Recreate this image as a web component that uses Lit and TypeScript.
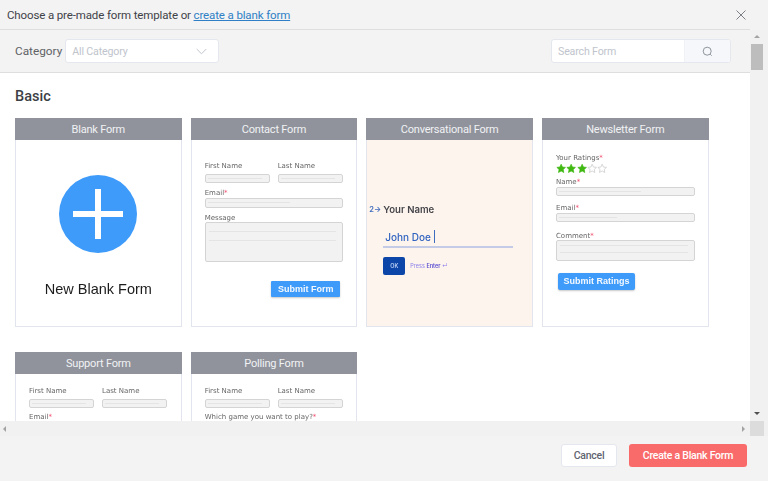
import { LitElement, css, html } from "lit";
import { customElement } from "lit/decorators.js";

const star = (on: boolean) => html`<svg class="star" viewBox="0 0 24 24" width="10.300" height="11">
  <path d="M12 2l3 6.600 7 .8-5.200 4.800 1.400 7.100L12 17.800 5.800 21.300l1.400-7.100L2 9.400l7-.8z"
    fill=${on ? "#3fb811" : "#fff"} stroke=${on ? "#3fb811" : "#c4c4c4"} stroke-width="1.600"></path>
</svg>`;

const label = (text: string, req = false) =>
  html`<div class="lbl">${text}${req ? html`<i>*</i>` : ""}</div>`;

const input = (w = 88) =>
  html`<div class="inp"><span style="width:${w}%"></span></div>`;

const area = (tall = false) => html`<div class="area ${tall ? "tall" : ""}"><span></span><span></span></div>`;

const names = html`<div class="two">
  <div>${label("First Name")}${input(92)}</div>
  <div>${label("Last Name")}${input(92)}</div>
</div>`;

@customElement("app-root")
export class AppRoot extends LitElement {
  static styles = css`
    :host {
      display: block;
      width: 768px;
      height: 481px;
      overflow: hidden;
      background: #f3f3f3;
      font-family: Roboto, "Noto Sans", sans-serif;
      color: #3f4248;
    }
    .top {
      width: 750px;
      height: 30px;
      box-sizing: border-box;
      padding: 1px 4px 0 7px;
      border-bottom: 1px solid #dedede;
      display: flex;
      align-items: center;
      justify-content: space-between;
      font-size: 11.5px;
      letter-spacing: -0.13px;
    }
    .top a {
      color: #2f7fc6;
      text-decoration: underline;
    }
    .mid {
      display: flex;
      height: 391px;
    }
    .scroller {
      width: 750px;
      overflow: hidden;
    }
    .filter {
      height: 43px;
      box-sizing: border-box;
      padding: 9px 19px 0 15px;
      border-bottom: 1px solid #dedede;
      display: flex;
      align-items: flex-start;
      justify-content: space-between;
    }
    .cat {
      display: flex;
      align-items: center;
      gap: 3px;
      font-size: 11.8px;
      color: #606266;
    }
    .select,
    .search {
      height: 24px;
      box-sizing: border-box;
      background: #fff;
      border: 1px solid #e4e7ed;
      border-radius: 3px;
      font-size: 10.6px;
      letter-spacing: -0.15px;
      color: #c0c4cc;
      display: flex;
      align-items: center;
    }
    .select {
      width: 154px;
      padding: 0 11px 0 6px;
      justify-content: space-between;
    }
    .search {
      width: 180px;
      padding-left: 6px;
      justify-content: space-between;
      overflow: hidden;
    }
    .search b {
      width: 46px;
      height: 100%;
      background: #f5f7fa;
      border-left: 1px solid #f0f2f6;
      box-sizing: border-box;
      display: flex;
      align-items: center;
      justify-content: center;
    }
    .content {
      background: #fff;
      height: 348px;
      box-sizing: border-box;
      padding: 14px 15px 0;
      overflow: hidden;
    }
    h2 {
      margin: 0 0 11px;
      font-size: 14.5px;
      line-height: 20px;
      font-weight: 500;
      color: #3c3f45;
    }
    .grid {
      display: grid;
      grid-template-columns: repeat(4, 166.670px);
      column-gap: 9px;
      row-gap: 25px;
    }
    .card {
      height: 209px;
      box-sizing: border-box;
      border: 1px solid #e2e4ee;
      display: flex;
      flex-direction: column;
    }
    .card > header {
      height: 22px;
      flex: none;
      margin: -1px -1px 0;
      background: #90939c;
      color: #f1f2f4;
      font-size: 11px;
      letter-spacing: -0.2px;
      line-height: 24px;
      text-align: center;
    }
    .thumb {
      flex: 1;
      min-height: 0;
      box-sizing: border-box;
      padding: 22px 13px 0 13px;
      font-family: "DejaVu Sans", sans-serif;
      filter: blur(0.35px);
    }
    .two {
      display: grid;
      grid-template-columns: 65px 65px;
      column-gap: 8px;
      margin-bottom: 5.500px;
    }
    .lbl {
      font-size: 7px;
      line-height: 9px;
      color: #666;
    }
    .lbl i {
      color: #f0506e;
      font-style: normal;
    }
    .inp {
      height: 9px;
      margin-top: 3px;
      box-sizing: border-box;
      border: 1px solid #d4d4d4;
      border-radius: 2px;
      background: #f2f2f2;
      display: flex;
      align-items: center;
      padding: 0 2px;
    }
    .inp span,
    .area span {
      display: block;
      height: 1px;
      background: #e4e4e4;
    }
    .area {
      height: 40px;
      box-sizing: border-box;
      border: 1px solid #d4d4d4;
      border-radius: 2px;
      background: #f2f2f2;
      padding: 8px 6px 0 3px;
      display: flex;
      flex-direction: column;
      gap: 8px;
    }
    .area.tall {
      height: 21px;
      margin-top: -1px;
      padding-top: 4px;
      gap: 6px;
    }
    .contact .area {
      margin-top: -1px;
    }
    .contact .full {
      margin-bottom: 6.500px;
    }
    .contact .full .inp {
      margin-top: 0;
      height: 10px;
    }
    .send {
      display: block;
      margin: 19px 0 0 auto;
      background: #3e9bfa;
      color: #f3f8ff;
      font-weight: 700;
      font-family: "Liberation Sans", sans-serif;
      border-radius: 1px;
      box-shadow: 0 1px 2px rgba(0, 0, 0, 0.22);
      text-align: center;
    }
    .contact .send {
      width: 69px;
      height: 16px;
      line-height: 16px;
      font-size: 9px;
      margin-right: 3px;
    }
    .blank {
      display: flex;
      flex-direction: column;
      align-items: center;
      padding: 35px 0 0;
      font-family: "Liberation Sans", sans-serif;
      font-size: 14.5px;
      color: #1c1c1c;
      gap: 28px;
    }
    .conv {
      background: #fdf4ee;
      padding: 63px 19px 0 16px;
      font-family: Inter, sans-serif;
      filter: blur(0.45px);
    }
    .conv .q {
      display: flex;
      align-items: center;
      font-size: 9.6px;
      font-weight: 600;
      color: #45454a;
      line-height: 14px;
      margin-left: -14px;
      gap: 3px;
    }
    .conv .q small {
      font-size: 7.5px;
      color: #3f6dbd;
      width: 11px;
    }
    .conv .name {
      margin-top: 12px;
      height: 19px;
      box-sizing: border-box;
      border-bottom: 2px solid #c3cbe6;
      font-size: 10px;
      font-weight: 500;
      line-height: 17px;
      color: #2f62c0;
      padding-left: 2px;
      display: flex;
      align-items: flex-start;
    }
    .conv .caret {
      width: 1px;
      height: 13px;
      margin: 1px 0 0 3px;
      background: #3f6dbd;
    }
    .conv .act {
      margin-top: 9px;
      display: flex;
      align-items: center;
      gap: 5px;
      font-size: 5.5px;
      color: #8c80e8;
    }
    .conv .ok {
      width: 22px;
      height: 18px;
      background: #0b46a8;
      border-radius: 2px;
      color: #bcd0f4;
      font-size: 5.5px;
      font-weight: 600;
      text-align: center;
      line-height: 18px;
    }
    .conv .act b {
      color: #5a4fd0;
      font-weight: 600;
    }
    .news {
      padding-top: 14px;
      filter: blur(0.55px);
    }
    .news .stars {
      display: flex;
      height: 11px;
      margin: 0 0 4px;
    }
    .news .star {
      display: block;
    }
    .news .inp {
      margin-top: 0;
    }
    .news .near {
      margin-bottom: 8px;
    }
    .news .far {
      margin-bottom: 10px;
    }
    .news .send {
      margin: 12px 0 0 2px;
      width: 77px;
      height: 17px;
      line-height: 17px;
      font-size: 9px;
      border-radius: 2px;
    }
    .plain {
      padding-top: 13px;
    }
    .plain .inp {
      margin-top: 2.500px;
    }
    .poll-q {
      margin-top: 2px;
    }
    .vbar {
      width: 18px;
      box-sizing: border-box;
      padding-right: 5px;
      background: #f1f1f1;
      display: flex;
      flex-direction: column;
      align-items: center;
    }
    .vbar .bar {
      width: 12px;
      height: 26px;
      margin-top: 6px;
      background: #bdbdbd;
    }
    .up,
    .down,
    .left,
    .right {
      width: 0;
      height: 0;
      border: 3.5px solid transparent;
    }
    .up {
      border-bottom-color: #a3a3a3;
      border-top-width: 0;
      margin-top: 5px;
    }
    .down {
      border-top-color: #505050;
      border-bottom-width: 0;
      margin-top: auto;
      margin-bottom: 6px;
    }
    .left {
      border-right-color: #a3a3a3;
      border-left-width: 0;
    }
    .right {
      border-left-color: #a3a3a3;
      border-right-width: 0;
    }
    .hrow {
      display: flex;
      height: 15px;
      background: #f1f1f1;
    }
    .hbar {
      width: 750px;
      display: flex;
      align-items: center;
      justify-content: space-between;
      padding: 0 5px 0 3px;
      box-sizing: border-box;
    }
    .corner {
      width: 14px;
      background: #dcdcdc;
    }
    .foot {
      height: 45px;
      box-sizing: border-box;
      padding: 8px 21px 0 0;
      display: flex;
      justify-content: flex-end;
      align-items: flex-start;
      gap: 12px;
      font-size: 10.5px;
      letter-spacing: -0.25px;
      font-weight: 500;
    }
    .btn {
      height: 23px;
      line-height: 23px;
      box-sizing: border-box;
      border-radius: 3px;
      text-align: center;
    }
    .cancel {
      width: 56px;
      background: #fff;
      border: 1px solid #e4e7ed;
      line-height: 21px;
      color: #5f6470;
    }
    .create {
      width: 118px;
      background: #f96b6b;
      color: #fff;
    }
  `;

  private card(title: string, cls: string, body: unknown) {
    return html`<section class="card">
      <header>${title}</header>
      <div class="thumb ${cls}">${body}</div>
    </section>`;
  }

  render() {
    return html`
      <div class="top">
        <span>Choose a pre-made form template or <a>create a blank form</a></span>
        <svg width="10" height="10" viewBox="0 0 10 10"><path d="M.5.5l9 9M9.500.5l-9 9" stroke="#7c7f85" stroke-width="1" fill="none"></path></svg>
      </div>
      <div class="mid">
        <div class="scroller">
          <div class="filter">
            <div class="cat">Category
              <div class="select">All Category
                <svg width="11" height="7" viewBox="0 0 11 7"><path d="M.7 1l4.800 4.800L10.300 1" stroke="#c0c4cc" fill="none"></path></svg>
              </div>
            </div>
            <div class="search">Search Form
              <b><svg width="11" height="11" viewBox="0 0 11 11"><circle cx="5.200" cy="5.200" r="4" stroke="#8f949c" fill="none"></circle><path d="M8.200 8.200l1.500 1.500" stroke="#8f949c"></path></svg></b>
            </div>
          </div>
          <div class="content">
            <h2>Basic</h2>
            <div class="grid">
              ${this.card("Blank Form", "blank", html`
                <svg width="78" height="78" viewBox="0 0 78 78">
                  <circle cx="39" cy="39" r="39" fill="#3e9bfa"></circle>
                  <path d="M36 14h6v22h22v6H42v22h-6V42H14v-6h22z" fill="#fff"></path>
                </svg>
                <span>New Blank Form</span>`)}
              ${this.card("Contact Form", "contact", html`
                ${names}
                <div class="full">${label("Email", true)}${input(62)}</div>
                ${label("Message")}${area()}
                <div class="send">Submit Form</div>`)}
              ${this.card("Conversational Form", "conv", html`
                <div class="q"><small>2→</small>Your Name</div>
                <div class="name">John Doe<span class="caret"></span></div>
                <div class="act"><span class="ok">OK</span><span>Press <b>Enter</b> ↵</span></div>`)}
              ${this.card("Newsletter Form", "news", html`
                ${label("Your Ratings", true)}
                <div class="stars">${[1, 1, 1, 0, 0].map((s) => star(!!s))}</div>
                <div class="near">${label("Name", true)}${input(62)}</div>
                <div class="far">${label("Email", true)}${input(44)}</div>
                ${label("Comment", true)}${area(true)}
                <div class="send">Submit Ratings</div>`)}
              ${this.card("Support Form", "plain", html`
                ${names}
                ${label("Email", true)}`)}
              ${this.card("Polling Form", "plain", html`
                ${names}
                <div class="poll-q">${label("Which game you want to play?", true)}</div>`)}
            </div>
          </div>
        </div>
        <div class="vbar">
          <span class="up"></span>
          <span class="bar"></span>
          <span class="down"></span>
        </div>
      </div>
      <div class="hrow">
        <div class="hbar"><span class="left"></span><span class="right"></span></div>
        <div class="corner"></div>
      </div>
      <div class="foot">
        <div class="btn cancel">Cancel</div>
        <div class="btn create">Create a Blank Form</div>
      </div>
    `;
  }
}
